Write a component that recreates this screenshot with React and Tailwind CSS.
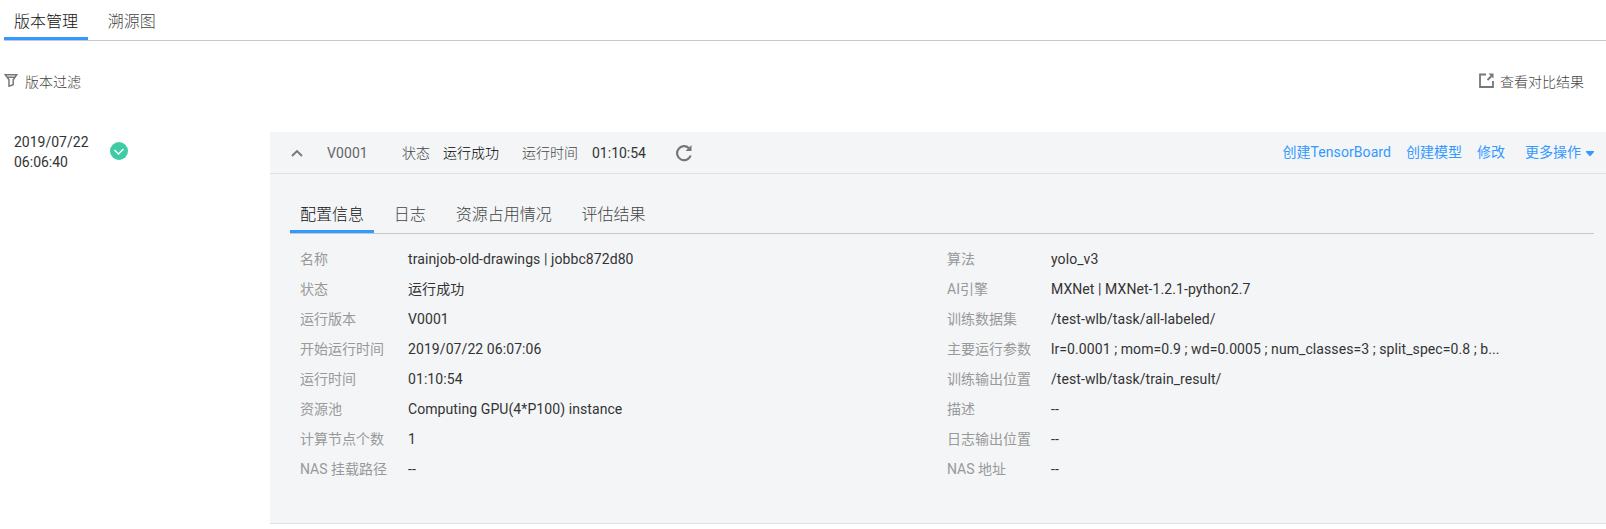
const font = "font-['Roboto','Noto_Sans_CJK_SC',sans-serif]";

const left = [
  ['名称', 'trainjob-old-drawings | jobbc872d80'],
  ['状态', '运行成功'],
  ['运行版本', 'V0001'],
  ['开始运行时间', '2019/07/22 06:07:06'],
  ['运行时间', '01:10:54'],
  ['资源池', 'Computing GPU(4*P100) instance'],
  ['计算节点个数', '1'],
  ['NAS 挂载路径', '--'],
];

const right = [
  ['算法', 'yolo_v3'],
  ['AI引擎', 'MXNet | MXNet-1.2.1-python2.7'],
  ['训练数据集', '/test-wlb/task/all-labeled/'],
  ['主要运行参数', 'lr=0.0001 ; mom=0.9 ; wd=0.0005 ; num_classes=3 ; split_spec=0.8 ; b...'],
  ['训练输出位置', '/test-wlb/task/train_result/'],
  ['描述', '--'],
  ['日志输出位置', '--'],
  ['NAS 地址', '--'],
];

function Tabs({ items }) {
  return (
    <div className="flex h-[38px] border-b border-[#c6c9cc] text-base font-light leading-[38px] text-[#444]">
      {items.map((t, i) => (
        <div
          key={t}
          className={i === 0 ? 'h-[37px] border-b-[3px] border-[#3399ff] px-[10px] text-[#111]' : 'h-[37px] pl-[19.8px] pr-[10px]'}
        >
          {t}
        </div>
      ))}
    </div>
  );
}

function Fields({ rows, labelClass }) {
  return (
    <dl className="flex flex-col">
      {rows.map(([k, v]) => (
        <div key={k} className="flex h-[30px] items-center whitespace-nowrap">
          <dt className={labelClass}>{k}</dt>
          <dd className="tracking-[0.08px] text-[#333]">{v}</dd>
        </div>
      ))}
    </dl>
  );
}

export default function App() {
  return (
    <div className={`${font} h-[529px] overflow-hidden bg-white text-sm text-[#333]`}>
      <div className="pl-1 pt-[3px]">
        <Tabs items={['版本管理', '溯源图']} />
      </div>
      <div className="flex h-[91px] items-start justify-between pl-1 pr-[22px] pt-[31px] leading-5 text-[#666]">
        <div className="flex items-start gap-[7px]">
          <svg width="14" height="14" viewBox="0 0 14 14" className="mt-px" fill="none" stroke="#777" strokeWidth="1.5">
            <path d="M1.3 1.7H12.7L9.2 6.8V11.8L5 13.2V6.8Z M2.5 4.3H11.5" />
          </svg>
          <span className="font-light text-[#444]">版本过滤</span>
        </div>
        <div className="flex items-start gap-[6px]">
          <svg width="15" height="15" viewBox="0 0 15 15" className="mt-px" fill="none" stroke="#777" strokeWidth="1.8">
            <path d="M7 1.5H1V14H14V8 M8.5 7L12.5 3" />
            <path d="M9.5 0.5H14.5V5.5Z" fill="#777" stroke="none" />
          </svg>
          <span className="font-light text-[#444]">查看对比结果</span>
        </div>
      </div>
      <div className="flex">
        <div className="flex w-[270px] shrink-0 pl-[14px]">
          <div className="w-24 leading-5">
            <div>2019/07/22</div>
            <div>06:06:40</div>
          </div>
          <svg width="18" height="18" viewBox="0 0 18 18" className="mt-[10px]">
            <circle cx="9" cy="9" r="9" fill="#3dcca6" />
            <path d="M4.5 8L8.5 12L13.5 7" fill="none" stroke="#fff" strokeWidth="1.5" />
          </svg>
        </div>
        <div className="h-[392px] min-w-0 grow border-b border-[#dfe1e3] bg-[#f3f5f7]">
          <div className="flex h-[42px] items-center justify-between border-b border-[#dfe1e3] pl-[21px] pr-3">
            <div className="flex items-center text-[#666]">
              <svg width="12" height="8" viewBox="0 0 12 8" fill="none" stroke="#777" strokeWidth="1.9">
                <path d="M1 7L6 2L11 7" />
              </svg>
              <span className="ml-6 w-[75px] tracking-[0.075px]">V0001</span>
              <span className="w-[41px] font-light text-[#444]">状态</span>
              <span className="w-[79px] font-light text-black">运行成功</span>
              <span className="w-[70px] font-light text-[#444]">运行时间</span>
              <span className="w-[83px] text-[#333]">01:10:54</span>
              <svg width="18" height="18" viewBox="0 0 18 18" fill="none" stroke="#777" strokeWidth="2.2">
                <path d="M15.7 11.5A7 7 0 1 1 14 4.2" />
                <path d="M16.5 1V7H10.5Z" fill="#777" stroke="none" />
              </svg>
            </div>
            <div className="flex items-center pb-0.5 text-[#3399ff]">
              <span className="tracking-[0.075px]">创建TensorBoard</span>
              <span className="ml-[15px]">创建模型</span>
              <span className="ml-[15px]">修改</span>
              <span className="ml-5">更多操作</span>
              <svg width="8" height="9" viewBox="0 0 8 9" className="ml-[5px]" fill="#3399ff">
                <path d="M0 4H8V5L4.5 9H3.5L0 5Z" />
              </svg>
            </div>
          </div>
          <div className="pl-5 pr-3 pt-[22px]">
            <Tabs items={['配置信息', '日志', '资源占用情况', '评估结果']} />
            <div className="flex pl-[10px] pt-[10px]">
              <div className="w-[647px] shrink-0">
                <Fields rows={left} labelClass="w-[108px] text-[#999]" />
              </div>
              <Fields rows={right} labelClass="w-[104px] text-[#999]" />
            </div>
          </div>
        </div>
      </div>
    </div>
  );
}
